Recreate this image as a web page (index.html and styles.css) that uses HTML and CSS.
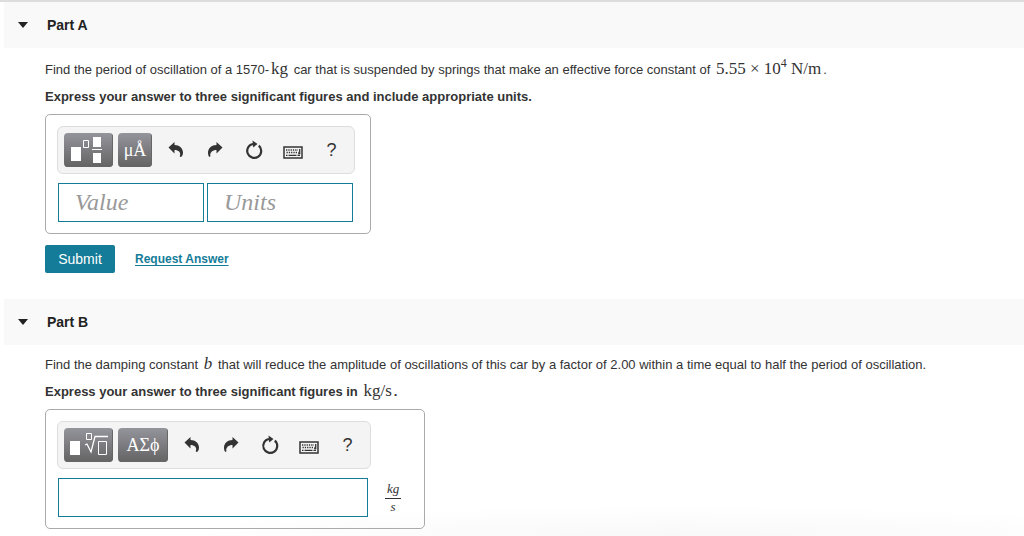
FILE: index.html
```
<!DOCTYPE html>
<html lang="en">
<head>
<meta charset="utf-8">
<title>Period and damping of a car</title>
<link rel="stylesheet" href="styles.css">
</head>
<body>
<svg class="symbols" aria-hidden="true">
  <symbol id="undo" viewBox="0 0 16 18"><path d="M.5 6.500 6.500 1v3C11.500 4 15 7.500 15 11.500c0 2-.7 3.500-2 4.500-1.200 0-1.500-.8-1-1.700C13 11.500 10.500 9 6.500 9v3.500Z"/></symbol>
  <symbol id="redo" viewBox="0 0 16 18"><path d="M15.500 6.500 9.500 1v3C4.500 4 1 7.500 1 11.500c0 2 .4 3.500 1.500 4.500.8 0 1-.8.8-1.700C3 11.500 5.500 9 9.500 9v3.500Z"/></symbol>
  <symbol id="reset" viewBox="0 0 18 20"><path d="M13.800 5.600A7 7 0 1 1 8 4" fill="none" stroke="currentColor" stroke-width="2.200"/><path d="M7.500.5 12.500 4 8.200 7.500Z"/></symbol>
  <symbol id="keyboard" viewBox="0 0 20 13"><path d="M1 1h18v11H1Z" fill="none" stroke="currentColor" stroke-width="1.500"/><path d="M3 4h12M3.500 6.500h12" fill="none" stroke="currentColor" stroke-width="1.300" stroke-dasharray="1.300 1"/><path d="M3 9.300h1.500M5.500 9.300h8M14.500 9.300H17M16.700 3v4.500h-1.500" fill="none" stroke="currentColor" stroke-width="1.300"/></symbol>
</svg>

<main class="page">
  <section class="part">
    <h2 class="part-header"><button class="toggle" type="button"><span class="caret"></span>Part A</button></h2>
    <div class="part-body">
      <p class="question">Find the period of oscillation of a 1570-<span class="math">kg</span> car that is suspended by springs that make an effective force constant of <span class="math">5.55 × 10<sup>4</sup> N/m</span>.</p>
      <p class="instruction">Express your answer to three significant figures and include appropriate units.</p>
      <div class="answer-box">
        <div class="toolbar">
          <button class="palette" type="button" aria-label="Templates">
            <svg width="36" height="28" viewBox="0 0 36 28"><path d="M0 11h10v14H0ZM22 1h8v10h-8ZM22 17h8v10h-8ZM21 13h10v1H21Z" fill="#fff"/><path d="M12.500 4.500h5v7h-5Z" fill="none" stroke="#fff"/></svg>
          </button>
          <button class="palette narrow" type="button">μÅ</button>
          <div class="tools">
            <button class="tool" type="button" aria-label="Undo"><svg width="16" height="18"><use href="#undo"/></svg></button>
            <button class="tool" type="button" aria-label="Redo"><svg width="16" height="18"><use href="#redo"/></svg></button>
            <button class="tool" type="button" aria-label="Reset"><svg width="18" height="20"><use href="#reset"/></svg></button>
            <button class="tool keys" type="button" aria-label="Keyboard shortcuts"><svg width="20" height="13"><use href="#keyboard"/></svg></button>
            <button class="tool" type="button">?</button>
          </div>
        </div>
        <div class="fields">
          <input class="field" type="text" placeholder="Value" aria-label="Value">
          <input class="field" type="text" placeholder="Units" aria-label="Units">
        </div>
      </div>
      <div class="actions">
        <button class="submit" type="button">Submit</button>
        <a class="request" href="#">Request Answer</a>
      </div>
    </div>
  </section>

  <section class="part">
    <h2 class="part-header"><button class="toggle" type="button"><span class="caret"></span>Part B</button></h2>
    <div class="part-body">
      <p class="question">Find the damping constant <i class="math">b</i> that will reduce the amplitude of oscillations of this car by a factor of 2.00 within a time equal to half the period of oscillation.</p>
      <p class="instruction">Express your answer to three significant figures in <span class="math">kg/s</span>.</p>
      <div class="answer-box">
        <div class="toolbar">
          <button class="palette" type="button" aria-label="Templates and roots">
            <svg width="38" height="24" viewBox="0 0 38 24"><path d="M0 8h10v14H0Z" fill="#fff"/><path d="M16.500.5h5v6h-5ZM28.500 8.500h8v13h-8Z" fill="none" stroke="#fff"/><path d="m15 12 2-1 4 8L25 3.500h13" fill="none" stroke="#fff" stroke-width="1.300"/></svg>
          </button>
          <button class="palette broad" type="button">ΑΣϕ</button>
          <div class="tools">
            <button class="tool" type="button" aria-label="Undo"><svg width="16" height="18"><use href="#undo"/></svg></button>
            <button class="tool" type="button" aria-label="Redo"><svg width="16" height="18"><use href="#redo"/></svg></button>
            <button class="tool" type="button" aria-label="Reset"><svg width="18" height="20"><use href="#reset"/></svg></button>
            <button class="tool keys" type="button" aria-label="Keyboard shortcuts"><svg width="20" height="13"><use href="#keyboard"/></svg></button>
            <button class="tool" type="button">?</button>
          </div>
        </div>
        <div class="fields">
          <input class="field wide" type="text" aria-label="Damping constant">
          <span class="fraction"><span class="numerator">kg</span><span>s</span></span>
        </div>
      </div>
    </div>
  </section>
</main>
</body>
</html>
```
FILE: styles.css
```
* { box-sizing: border-box; }
body {
  margin: 0;
  background: #fff;
  color: #333;
  font-family: "Liberation Sans", Arial, sans-serif;
  font-size: 13px;
}
button, input { font: inherit; color: inherit; margin: 0; }
button { padding: 0; border: 0; background: none; cursor: pointer; }
.symbols { display: none; }
.page {
  min-height: 100vh;
  border-top: 2px solid #ddd;
  background: radial-gradient(ellipse 50% 30px at 66% 100%, #f8f8f8, #fff) bottom / 100% 30px no-repeat;
}
.part-header {
  margin: 0 0 0 4px;
  background: #f9f9f9;
  font-size: 14px;
}
.toggle {
  display: flex;
  align-items: center;
  gap: 19px;
  width: 100%;
  height: 46px;
  padding-left: 14px;
  color: #222;
  font-weight: bold;
}
.caret {
  border: 6px solid transparent;
  border-width: 6px 5px 0;
  border-top-color: #222;
}
.part-body { padding: 8px 0 0 45px; }
.part + .part .part-body { padding-top: 6px; }
.question, .instruction { margin: 0; line-height: 27px; white-space: nowrap; }
.instruction { font-weight: bold; }
.math {
  margin: 0 2px;
  font-family: "Liberation Serif", "Times New Roman", serif;
  font-size: 17px;
  font-weight: normal;
  line-height: 1;
}
.math sup { font-size: 12px; line-height: 0; }
.answer-box {
  width: fit-content;
  margin-top: 4px;
  padding: 11px 15px 11px 11px;
  border: 1px solid #aaa;
  border-radius: 5px;
}
.toolbar {
  display: flex;
  align-items: center;
  gap: 5px;
  width: fit-content;
  height: 48px;
  padding: 0 2px 0 6px;
  border: 1px solid #ddd;
  border-radius: 6px;
  background: #f4f4f4;
}
.palette {
  display: flex;
  align-items: center;
  justify-content: center;
  width: 49px;
  height: 34px;
  border-radius: 4px;
  background: linear-gradient(#94949c, #646464);
  box-shadow: inset -1px -1px #666;
  color: #fff;
  font-family: "Liberation Serif", "Times New Roman", serif;
  font-size: 18px;
}
.narrow { width: 34px; }
.broad { width: 50px; }
.tools { display: flex; }
.tool {
  display: flex;
  align-items: center;
  justify-content: center;
  width: 39px;
  height: 34px;
  padding-right: 2px;
  font-size: 18px;
}
.tool svg { fill: currentColor; }
.keys { padding-top: 4px; }
.fields { display: flex; gap: 3px; margin-top: 9px; padding-left: 1px; }
.field {
  width: 146px;
  height: 39px;
  padding: 0 16px;
  border: 1px solid #147c98;
  border-radius: 0;
  background: #fff;
  font-family: "Liberation Serif", "Times New Roman", serif;
  font-size: 24px;
}
.field::placeholder { color: #999; font-style: italic; opacity: 1; }
.wide { width: 310px; }
.fraction {
  display: flex;
  flex-direction: column;
  align-items: center;
  align-self: center;
  margin: 0 8px 0 14px;
  font: italic 13px/15px "Liberation Serif", "Times New Roman", serif;
}
.numerator { padding: 0 2px 2px; border-bottom: 1px solid #333; }
.actions { display: flex; align-items: center; gap: 20px; margin: 11px 0 26px; }
.submit {
  width: 70px;
  height: 28px;
  border-radius: 2px;
  background: #147c98;
  color: #fff;
  font-size: 14px;
}
.request { color: #147c98; font-size: 12px; font-weight: bold; text-underline-offset: 2px; }
```
